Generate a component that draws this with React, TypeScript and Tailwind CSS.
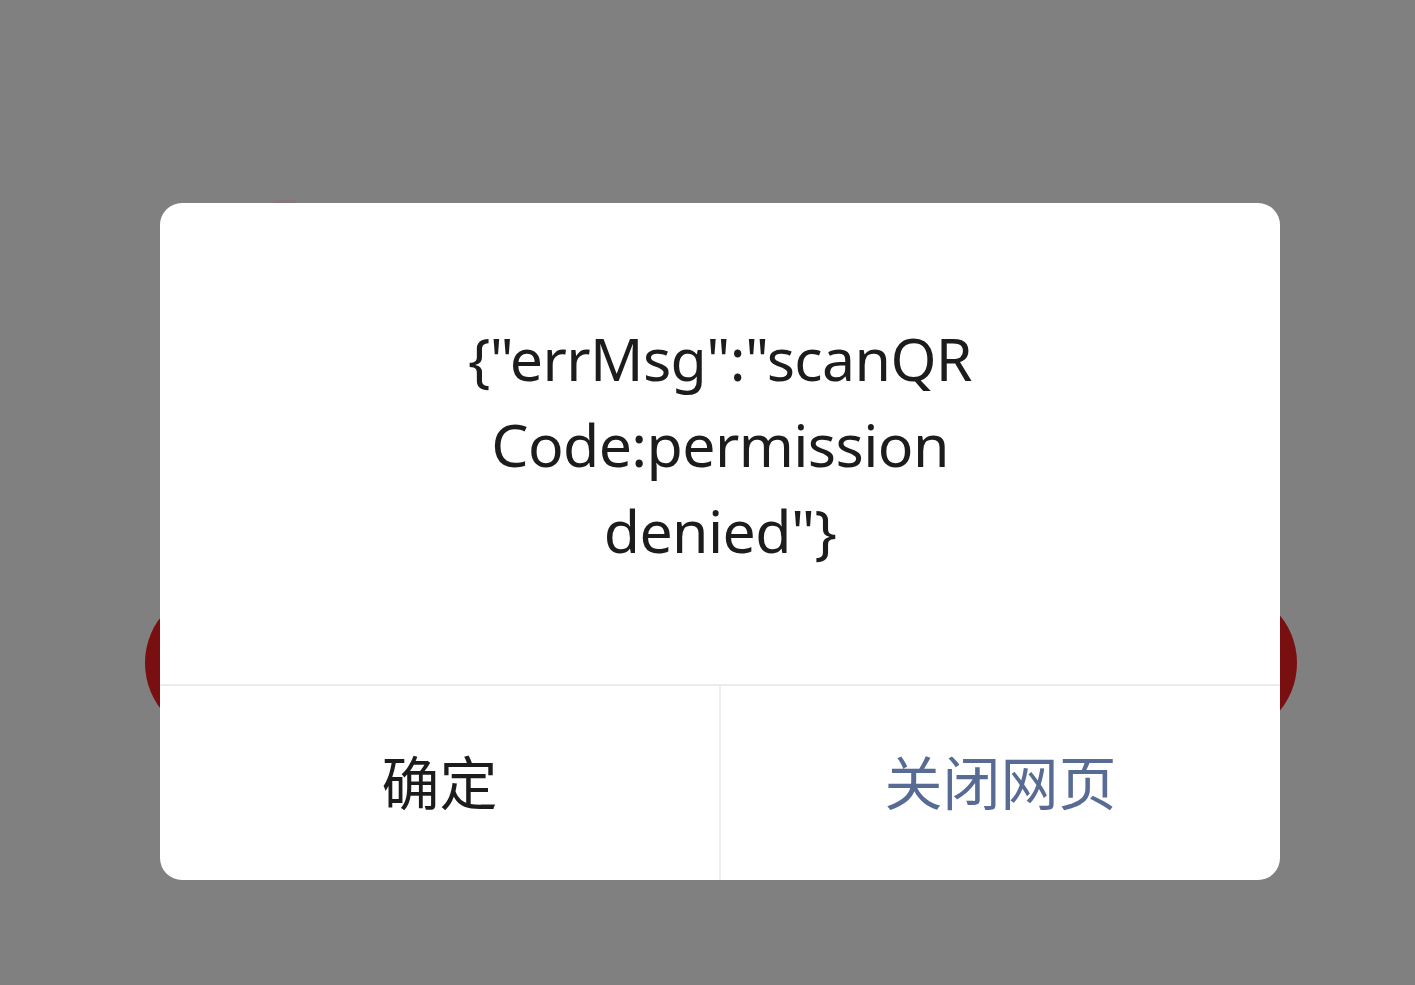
export default function App() {
  return (
    <div className="h-[985px] w-[1415px] bg-[#808080] pl-[160px] pt-[203px] overflow-hidden">
      <div className="relative w-[1120px] h-[677px]">
        {/* red button under the overlay, only its ends peek out */}
        <div className="absolute left-[-15px] right-[-17px] top-[385px] h-[150px] rounded-full bg-[#7a0f12]" />
        <div className="absolute left-[113px] top-[-3px] w-[24px] h-[6px] rounded-full bg-[#86777a]" />
        <div className="relative h-full bg-white rounded-[22px] flex flex-col overflow-hidden">
          <div className="flex-1 flex items-center justify-center">
            <p className="text-center text-[59px] leading-[86px] text-[#1c1c1c] font-['Noto_Sans','Noto_Sans_CJK_SC',sans-serif] tracking-[-0.6px]">
              {'{"errMsg":"scanQR'}
              <br />
              {'Code:permission'}
              <br />
              {'denied"}'}
            </p>
          </div>
          <div className="h-[196px] border-t-2 border-[#ececec] flex">
            <button className="flex-1 flex items-center justify-center text-[58px] text-[#1c1c1c] font-['Noto_Sans_CJK_SC',sans-serif] pb-[6px]">
              确定
            </button>
            <div className="w-[2px] bg-[#eeeeee]" />
            <button className="flex-1 flex items-center justify-center text-[58px] text-[#576b95] font-['Noto_Sans_CJK_SC',sans-serif] pb-[6px]">
              关闭网页
            </button>
          </div>
        </div>
      </div>
    </div>
  );
}
